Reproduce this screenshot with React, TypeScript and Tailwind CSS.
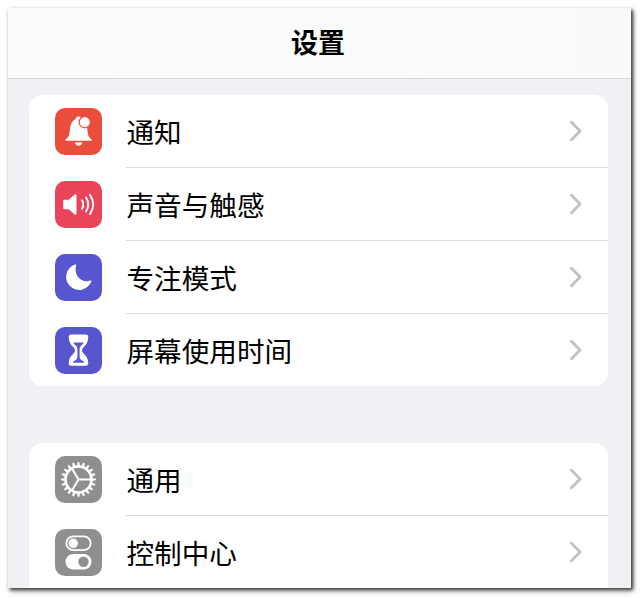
import type { ReactNode } from "react";

const Bell = () => (
  <>
    <path
      fill="#fff"
      d="M11.200 32.700c-1 0-1.100-1-.4-1.500 2.900-2 3.600-4.200 4-8.800.5-6 2.500-9.800 5.600-11.200.4-1.600 1.500-2.600 3.200-2.600s2.800 1 3.200 2.600c3.300 1.400 5.200 5.200 5.700 11.200.4 4.600 1.100 6.800 4 8.800.7.5.6 1.500-.4 1.500Z"
    />
    <path fill="#fff" d="M19.800 34.500h7.600c-.4 2-1.900 3.200-3.800 3.200s-3.400-1.200-3.800-3.200Z" />
    <circle cx="29.800" cy="14.200" r="5.600" fill="#fff" stroke="#eb4d3d" strokeWidth="1.200" />
  </>
);

const Speaker = () => (
  <>
    <path
      fill="#fff"
      d="M9.500 18.700h4.200l6-5.100c.9-.7 1.800-.3 1.800.8v18.200c0 1.100-.9 1.500-1.800.8l-6-5.100H9.500c-.8 0-1.300-.5-1.300-1.200v-7.200c0-.7.5-1.200 1.300-1.200Z"
    />
    <g fill="none" stroke="#fff" strokeWidth="1.900" strokeLinecap="round">
      <path d="M27 19.300q2.700 4.200 0 8.400" />
      <path d="M31 16.500q4.500 7 0 14" />
      <path d="M35 13.900q6.500 9.600 0 19.200" />
    </g>
  </>
);

const Moon = () => (
  <path
    fill="#fff"
    d="M20.200 10.500A13 13 0 1 0 36.300 27.500c.3-.8-.3-1.200-1-.9C26.800 29.700 18.200 21.500 21.200 11.400c.2-.7-.3-1.200-1-.9Z"
  />
);

const Hourglass = () => (
  <>
    <path
      fill="#fff"
      d="M16.200 7.500h14.600c1.700 0 2.600 1 2.500 2.600-.2 4.800-1.700 7.300-4.500 9.900-2.500 2.300-2.500 4.500 0 6.800 2.800 2.600 4.300 5.100 4.500 9.300.1 1.700-.8 2.700-2.500 2.700H16.200c-1.700 0-2.600-1-2.500-2.700.2-4.200 1.700-6.700 4.500-9.300 2.500-2.300 2.500-4.500 0-6.800-2.800-2.600-4.300-5.100-4.500-9.900-.1-1.600.8-2.600 2.500-2.600Z"
    />
    <path
      fill="#5856ce"
      d="M19.100 15.600h8.800c.6 0 .8.5.4 1-.9 1.200-2.200 1.900-2.900 2.900-.7.900-.8 1.900-.8 3.100v6.200c0 2.100.4 3.500 1.700 4.300l2.500 1.400c.7.400.5 1.200-.2 1.200H18.400c-.7 0-.9-.8-.2-1.200l2.500-1.400c1.300-.8 1.700-2.200 1.700-4.300v-6.200c0-1.200-.1-2.200-.8-3.100-.7-1-2-1.700-2.900-2.900-.4-.5-.2-1 .4-1Z"
    />
  </>
);

const teeth = Array.from({ length: 20 }, (_, i) => i * 18);

const Gear = () => (
  <g stroke="#fff" fill="none">
    {teeth.map((angle) => (
      <path key={angle} transform={`rotate(${angle} 23.500 23.500)`} d="M22.400 9.800 23 6.300h1l.6 3.500Z" fill="#fff" strokeWidth=".7" strokeLinejoin="round" />
    ))}
    <circle cx="23.500" cy="23.500" r="12.900" strokeWidth="2.500" />
    <path strokeWidth="2" d="M22 23.500h14M23.500 23.500l-6.700-11.300M23.500 23.500l-6.700 11.300" />
  </g>
);

const Toggles = () => (
  <>
    <rect x="11.300" y="7.300" width="24.400" height="13.900" rx="6.950" fill="none" stroke="#fff" strokeWidth="1.700" />
    <circle cx="18.200" cy="14.300" r="4.800" fill="#fff" />
    <rect x="10.500" y="25" width="26" height="15.600" rx="7.800" fill="#fff" />
    <circle cx="28.500" cy="32.800" r="5.200" fill="#8f8f91" />
  </>
);

type RowProps = { label: string; color: string; icon: ReactNode; last?: boolean };

const Row = ({ label, color, icon, last }: RowProps) => (
  <li className="flex h-[73px] pl-[26px]">
    <span className={`mt-[13px] size-[47px] shrink-0 overflow-hidden rounded-[10px] ${color}`}>
      <svg viewBox="0 0 47 47" className="size-full">{icon}</svg>
    </span>
    <div className={`ml-6 flex h-[73px] flex-1 items-center justify-between border-b pr-[26px] ${last ? "border-transparent" : "border-[#d9d9db]"}`}>
      <span className="pl-[0.5px] text-[27.600px] leading-10">{label}</span>
      <svg viewBox="0 0 14 22" className="h-[22px] w-[14px]" fill="none" stroke="#c2c2c5" strokeWidth="3" strokeLinecap="round" strokeLinejoin="round">
        <path d="m3.500 2.300 8.500 8.700-8.500 8.700" />
      </svg>
    </div>
  </li>
);

export default function App() {
  return (
    <main className="h-[598px] w-[640px] overflow-hidden bg-white pt-2 pl-2 font-['Noto_Sans_CJK_SC',sans-serif] text-black">
      <section className="flex h-[580px] w-[623px] flex-col overflow-hidden bg-[#f1f0f5] shadow-[2px_2px_3px_#444,2px_3px_6px_rgba(0,0,0,0.350)]">
        <header className="flex h-[71px] shrink-0 items-center justify-center border-b border-[#d7d8d9] bg-linear-to-r from-[#f9fcfa] to-[#fafafa] pr-[3px] pb-0.5">
          <h1 className="text-[27px] leading-10 font-bold">设置</h1>
        </header>
        <div className="flex flex-col gap-[57px] pt-4 pr-[23px] pl-[21px]">
          <ul className="h-[291px] overflow-hidden rounded-[14px] bg-white">
            <Row label="通知" color="bg-[#eb4d3d]" icon={<Bell />} />
            <Row label="声音与触感" color="bg-[#ea445a]" icon={<Speaker />} />
            <Row label="专注模式" color="bg-[#5856ce]" icon={<Moon />} />
            <Row label="屏幕使用时间" color="bg-[#5856ce]" icon={<Hourglass />} last />
          </ul>
          <ul className="rounded-t-[14px] bg-white">
            <Row label="通用" color="bg-[#8f8f91]" icon={<Gear />} />
            <Row label="控制中心" color="bg-[#8f8f91]" icon={<Toggles />} last />
          </ul>
        </div>
      </section>
    </main>
  );
}
